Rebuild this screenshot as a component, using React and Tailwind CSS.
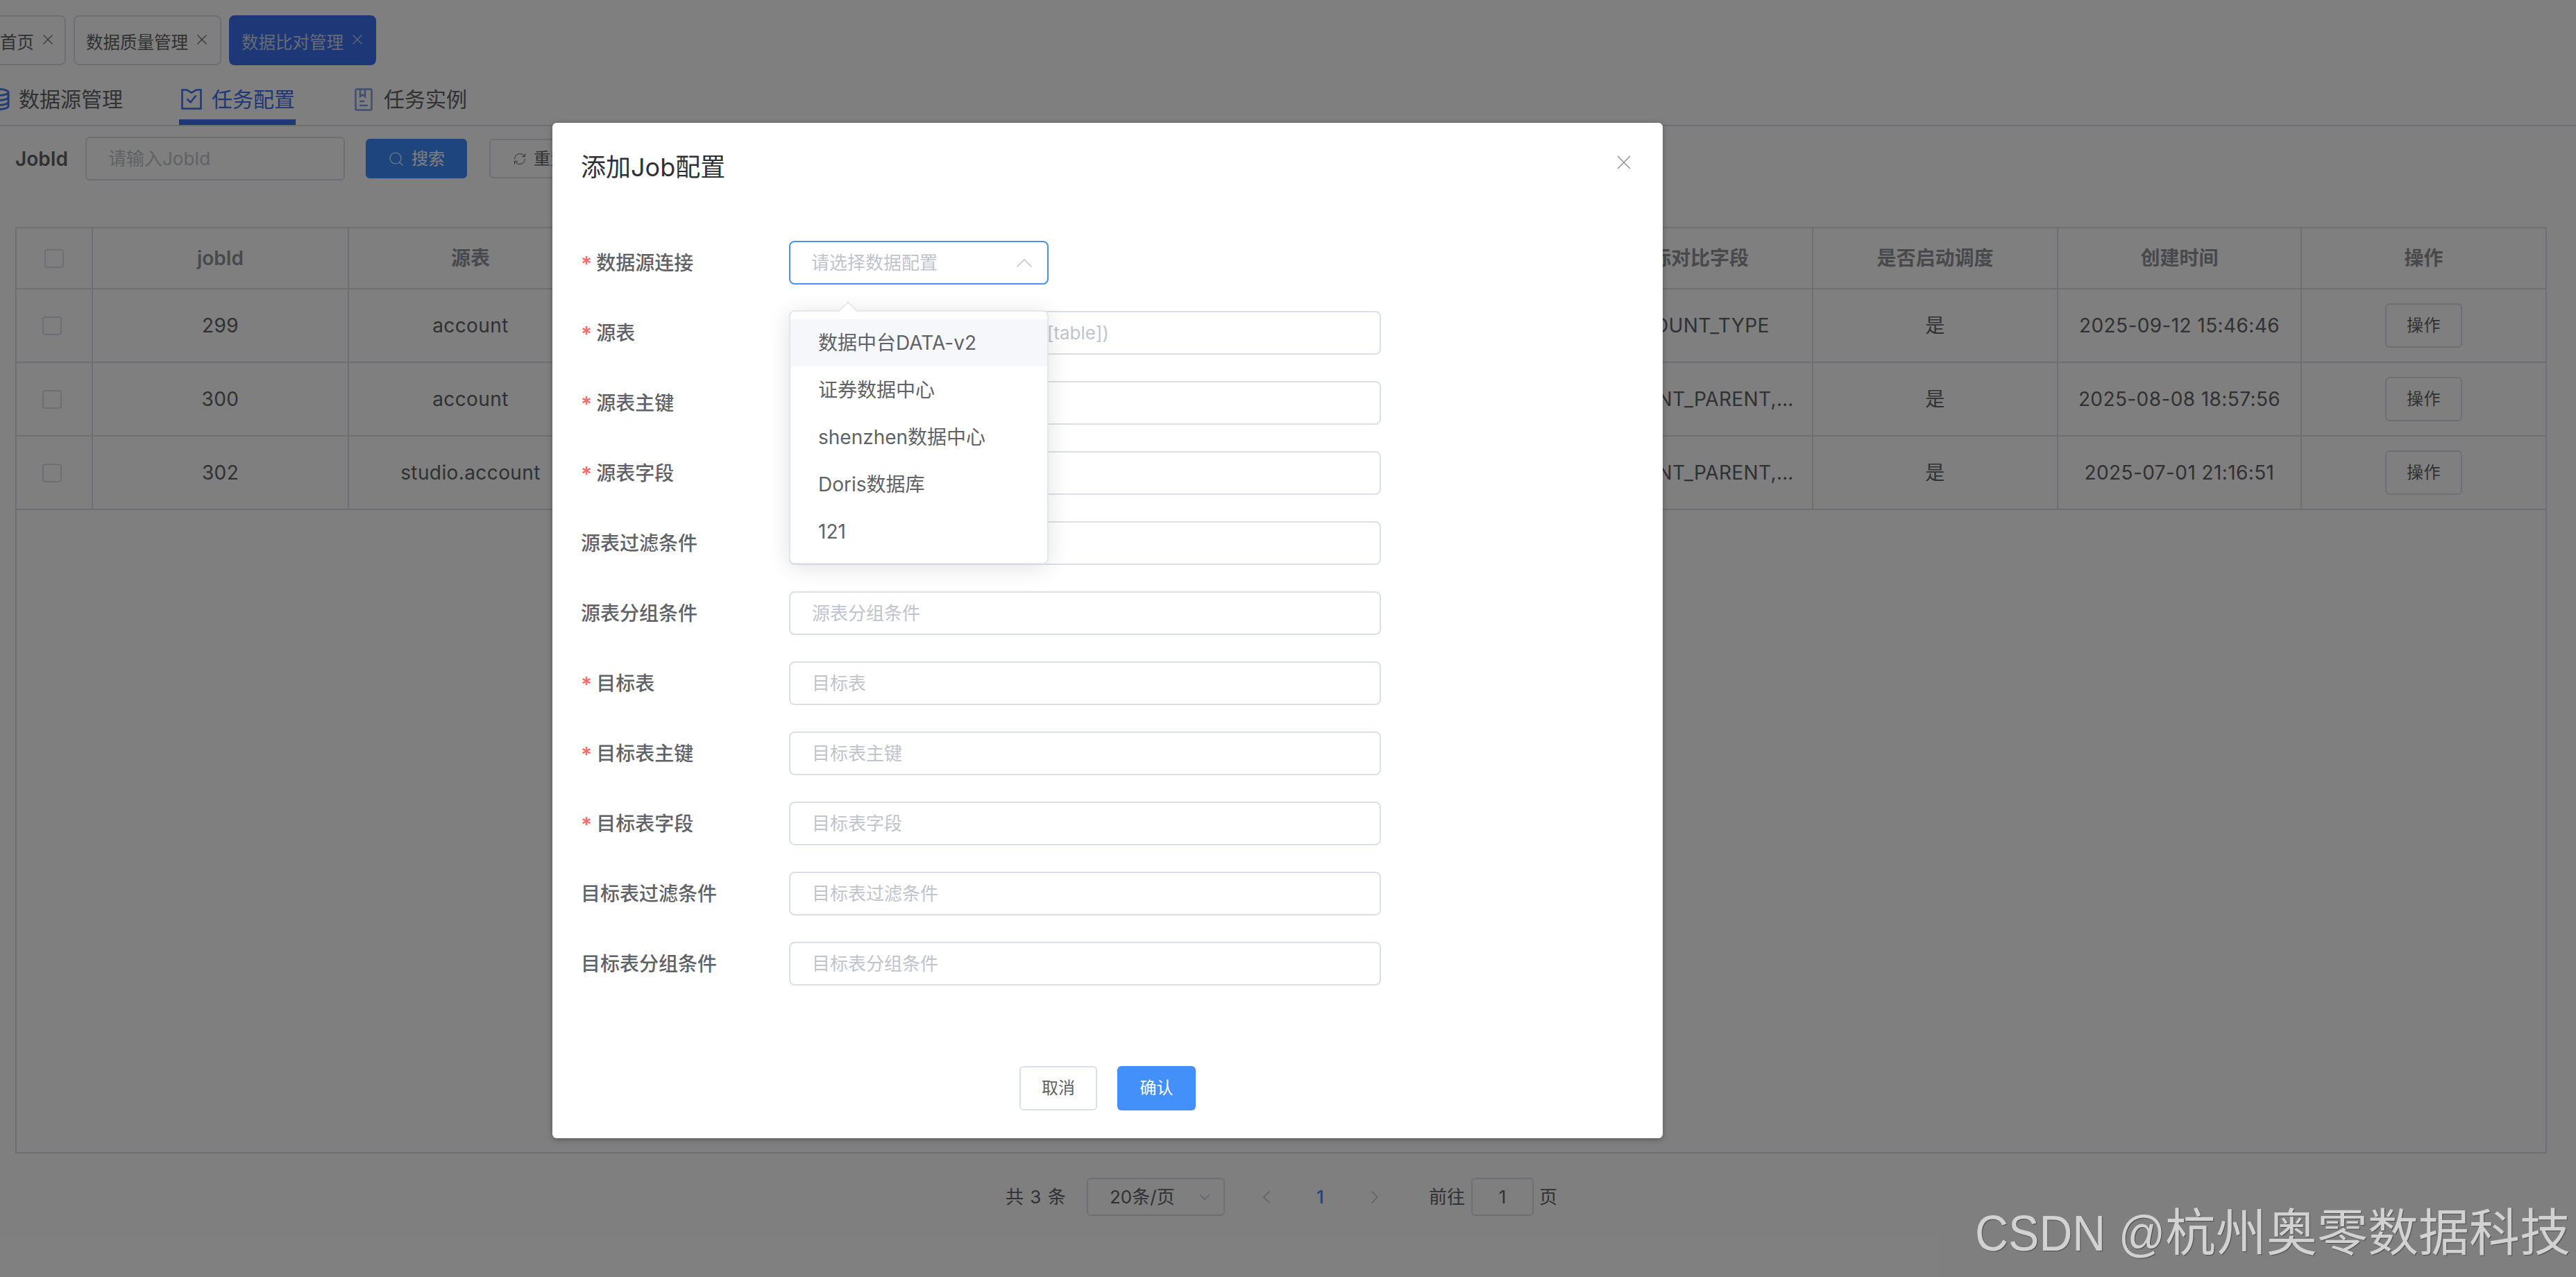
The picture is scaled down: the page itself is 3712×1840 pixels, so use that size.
import { useState } from "react";
import { ChevronDown, ChevronLeft, ChevronRight, ChevronUp, RefreshCw, Search } from "lucide-react";

const font = "font-['Inter','Noto_Sans_CJK_SC',sans-serif]";

const rows = [
  { id: 299, table: "account", field: "ACCOUNT_TYPE", time: "2025-09-12 15:46:46" },
  { id: 300, table: "account", field: "ACCOUNT_PARENT,ACCOUNT_ID,ACCOUNT_TYPE", time: "2025-08-08 18:57:56" },
  { id: 302, table: "studio.account", field: "ACCOUNT_PARENT,ACCOUNT_ID,ACCOUNT_TYPE", time: "2025-07-01 21:16:51" },
];

const fields = [
  { label: "源表", required: true, placeholder: "请输入源表(格式:[database.][table])" },
  { label: "源表主键", required: true, placeholder: "源表主键" },
  { label: "源表字段", required: true, placeholder: "源表字段" },
  { label: "源表过滤条件", placeholder: "源表过滤条件" },
  { label: "源表分组条件", placeholder: "源表分组条件" },
  { label: "目标表", required: true, placeholder: "目标表" },
  { label: "目标表主键", required: true, placeholder: "目标表主键" },
  { label: "目标表字段", required: true, placeholder: "目标表字段" },
  { label: "目标表过滤条件", placeholder: "目标表过滤条件" },
  { label: "目标表分组条件", placeholder: "目标表分组条件" },
];

const options = ["数据中台DATA-v2", "证券数据中心", "shenzhen数据中心", "Doris数据库", "121"];

const gridCols =
  "grid grid-cols-[110px_369px_352px_351px_351px_352px_352px_352px_353px_351px_351px]";

function Cross({ className }) {
  return (
    <svg viewBox="0 0 16 16" className={className} fill="none" stroke="currentColor" strokeWidth="1.1">
      <path d="M1.5 1.5 14.5 14.5M14.5 1.5 1.5 14.5" />
    </svg>
  );
}

function Tab({ children, active, className = "" }) {
  return (
    <div
      className={`flex h-[72px] items-center rounded-[8px] border-2 text-[24.5px] ${
        active ? "border-[#3c6eee] bg-[#3c6eee] text-[#cfd6e8]" : "border-[#dcdfe6] text-[#606266]"
      } ${className}`}
    >
      <span className="pt-[6px]">{children}</span>
      <Cross className="mb-[2px] ml-[12px] h-[16px] w-[16px]" />
    </div>
  );
}

function DbIcon() {
  return (
    <svg viewBox="0 0 30 32" className="h-[32px] w-[30px] text-[#4a78ee]" fill="none" stroke="currentColor" strokeWidth="3">
      <ellipse cx="15" cy="6" rx="13" ry="4.5" />
      <path d="M2 6v20c0 2.5 6 4.5 13 4.5s13-2 13-4.5V6" />
      <path d="M2 13c0 2.5 6 4.5 13 4.5s13-2 13-4.5M2 20c0 2.5 6 4.5 13 4.5s13-2 13-4.5" />
    </svg>
  );
}

function TaskIcon() {
  return (
    <svg viewBox="0 0 30 30" className="h-[30px] w-[30px] text-[#3c6eee]" fill="none" stroke="currentColor" strokeWidth="2.5">
      <path d="M1.5 1.5h6.5l7 4 7-4h6.5v27h-27z" />
      <path d="M8.5 14.5l5 5 8-10" />
    </svg>
  );
}

function DocIcon() {
  return (
    <svg viewBox="0 0 26 33" className="h-[33px] w-[26px] text-[#7f9fe0]" fill="none" stroke="currentColor" strokeWidth="2.5">
      <rect x="1.5" y="1.5" width="23" height="30" rx="1.5" />
      <path d="M8 2v10l3.5-2.5L15 12V2" />
      <path d="M7 19h7M7 25h12" />
    </svg>
  );
}

function HeadCell({ children, last }) {
  return (
    <div className={`flex items-center justify-center text-[28px] font-semibold text-[#909399] ${last ? "" : "border-r-2 border-[#dcdfe6]"}`}>
      {children}
    </div>
  );
}

function Cell({ children, last }) {
  return (
    <div className={`flex items-center justify-center overflow-hidden px-[24px] text-[28px] tracking-[0.4px] text-[#606266] ${last ? "" : "border-r-2 border-[#dcdfe6]"}`}>
      {children}
    </div>
  );
}

function Box({ className = "" }) {
  return <span className={`block h-[27px] w-[28px] rounded-[4px] border-2 border-[#dcdfe6] ${className}`} />;
}

function TaskTable() {
  return (
    <div className="ml-[22px] mt-[67px] h-[1335px] w-[3648px] border-2 border-[#dcdfe6]">
      <div className={`${gridCols} h-[88px] border-b-2 border-[#dcdfe6]`}>
        <HeadCell><Box /></HeadCell>
        <HeadCell>jobId</HeadCell>
        <HeadCell>源表</HeadCell>
        <HeadCell>源表主键</HeadCell>
        <HeadCell>源表字段</HeadCell>
        <HeadCell>目标表</HeadCell>
        <HeadCell>目标表主键</HeadCell>
        <HeadCell>目标对比字段</HeadCell>
        <HeadCell>是否启动调度</HeadCell>
        <HeadCell>创建时间</HeadCell>
        <HeadCell last>操作</HeadCell>
      </div>
      {rows.map((r) => (
        <div key={r.id} className={`${gridCols} h-[106px] border-b-2 border-[#dcdfe6]`}>
          <Cell><Box className="mr-[6px] shrink-0" /></Cell>
          <Cell>{r.id}</Cell>
          <Cell>{r.table}</Cell>
          <Cell>id</Cell>
          <Cell>id</Cell>
          <Cell>{r.table}</Cell>
          <Cell>id</Cell>
          <Cell><span className="truncate">{r.field}</span></Cell>
          <Cell>是</Cell>
          <Cell>{r.time}</Cell>
          <Cell last>
            <button className="h-[64px] w-[111px] shrink-0 rounded-[6px] border-2 border-[#dcdfe6] text-[24px] text-[#606266]">操作</button>
          </Cell>
        </div>
      ))}
    </div>
  );
}

function Pagination() {
  return (
    <div className="mt-[35px] flex h-[55px] items-center text-[26px] text-[#606266]">
      <span className="ml-[1449px] w-[86px] tracking-[1px] whitespace-nowrap">共 3 条</span>
      <div className="ml-[31px] flex h-[55px] w-[199px] items-center justify-between rounded-[6px] border-2 border-[#dcdfe6] pl-[31px] pr-[14px]">
        <span>20条/页</span>
        <ChevronDown className="h-[26px] w-[26px] text-[#c0c4cc]" strokeWidth={1.3} />
      </div>
      <ChevronLeft className="ml-[44px] h-[32px] w-[32px] text-[#c0c4cc]" strokeWidth={1.3} />
      <span className="ml-[56px] w-[20px] font-medium text-[#3f8bfd]">1</span>
      <ChevronRight className="ml-[48px] h-[32px] w-[32px] text-[#c0c4cc]" strokeWidth={1.3} />
      <span className="ml-[62px]">前往</span>
      <div className="ml-[9px] flex h-[55px] w-[90px] items-center justify-center rounded-[6px] border-2 border-[#dcdfe6]">1</div>
      <span className="ml-[8px]">页</span>
    </div>
  );
}

function Background() {
  return (
    <div>
      <div className="-ml-[21px] flex gap-[11px] pt-[22px]">
        <Tab className="w-[116px] pl-[19px]">首页</Tab>
        <Tab className="w-[213px] pl-[16px]">数据质量管理</Tab>
        <Tab active className="w-[212px] pl-[16px]">数据比对管理</Tab>
      </div>

      <div className="flex h-[88px] items-end border-b-2 border-[#dcdfe6] text-[30px] text-[#606266]">
        <div className="-ml-[16px] flex h-[70px] items-center gap-[13px] pb-[4px]">
          <DbIcon />
          <span>数据源管理</span>
        </div>
        <div className="ml-[81px] flex h-[70px] w-[168px] items-center gap-[14px] border-b-[8px] border-[#3c6eee] pl-[3px] pt-[4px] text-[#3c6eee]">
          <TaskIcon />
          <span>任务配置</span>
        </div>
        <div className="ml-[85px] flex h-[70px] items-center gap-[16px] pb-[4px]">
          <DocIcon />
          <span>任务实例</span>
        </div>
      </div>

      <div className="mt-[15px] flex h-[63px] items-center">
        <span className="ml-[22px] w-[101px] text-[28px] font-semibold text-[#606266]">JobId</span>
        <div className="flex h-[63px] w-[374px] items-center rounded-[6px] border-2 border-[#dcdfe6] pl-[31px] text-[26px] text-[#c0c4cc]">请输入JobId</div>
        <button className="ml-[30px] flex h-[57px] w-[146px] items-center justify-center gap-[10px] rounded-[6px] bg-[#3f8bfd] text-[24px] text-white">
          <Search className="h-[24px] w-[24px]" strokeWidth={1.2} />
          搜索
        </button>
        <button className="ml-[32px] flex h-[57px] w-[146px] items-center justify-center gap-[10px] rounded-[6px] border-2 border-[#dcdfe6] text-[24px] text-[#606266]">
          <RefreshCw className="h-[20px] w-[20px]" strokeWidth={1.2} />
          重置
        </button>
      </div>

      <TaskTable />
      <Pagination />
    </div>
  );
}

function Label({ required, children }) {
  return (
    <label className="flex w-[300px] shrink-0 items-center text-[28px] font-medium text-[#606266]">
      {required && <span className="mr-[6px] mt-[3px] text-[30px] font-semibold leading-none text-[#f56c6c]">*</span>}
      {children}
    </label>
  );
}

function DataSourceSelect() {
  return (
    <div className="relative w-[374px]">
      <div className="flex h-[63px] items-center justify-between rounded-[8px] border-2 border-[#4a90f0] pl-[30px] pr-[13px] text-[26px] text-[#c0c4cc]">
        <span>请选择数据配置</span>
        <ChevronUp className="h-[40px] w-[40px]" strokeWidth={0.9} />
      </div>
      <div className="absolute left-0 top-[100px] z-10 h-[366px] w-[374px] rounded-[8px] border-2 border-[#e4e7ed] bg-white py-[11px] shadow-[0_4px_32px_rgba(0,0,0,0.12)]">
        <span className="absolute -top-[11px] left-[73px] h-[20px] w-[20px] rotate-45 border-l-2 border-t-2 border-[#e4e7ed] bg-white" />
        {options.map((o, i) => (
          <div key={o} className={`relative flex h-[68px] items-center pl-[40px] text-[28px] text-[#606266] ${i === 0 ? "bg-[#f5f7fa]" : ""}`}>
            {o}
          </div>
        ))}
      </div>
    </div>
  );
}

function JobDialog() {
  return (
    <div className="absolute left-[796px] top-[177px] z-20 h-[1463px] w-[1600px] rounded-[6px] bg-white pl-[41px] pt-[39px] shadow-[0_2px_8px_rgba(0,0,0,0.3)]">
      <Cross className="absolute right-[45px] top-[46px] h-[22px] w-[22px] text-[#909399]" />
      <h2 className="h-[50px] text-[36px] font-normal leading-[50px] text-[#303133]">添加Job配置</h2>

      <div className="mt-[81px] flex flex-col gap-[38px]">
        <div className="flex h-[63px]">
          <Label required>数据源连接</Label>
          <DataSourceSelect />
        </div>
        {fields.map((f) => (
          <div key={f.label} className="flex h-[63px]">
            <Label required={f.required}>{f.label}</Label>
            <input
              placeholder={f.placeholder}
              className="h-[63px] w-[853px] rounded-[8px] border-2 border-[#dcdfe6] pl-[31px] text-[26px] outline-none placeholder:text-[#c0c4cc]"
            />
          </div>
        ))}
      </div>

      <div className="-ml-[41px] mt-[116px] flex justify-center gap-[29px] text-[24px]">
        <button className="h-[64px] w-[112px] rounded-[6px] border-2 border-[#dcdfe6] text-[#606266]">取消</button>
        <button className="h-[64px] w-[113px] rounded-[6px] bg-[#4490fb] text-white">确认</button>
      </div>
    </div>
  );
}

export default function App() {
  const [open] = useState(true);

  return (
    <div className={`relative h-[1840px] w-[3712px] overflow-hidden bg-white ${font}`}>
      <Background />
      {open && (
        <>
          <div className="absolute inset-0 z-10 bg-black/50" />
          <JobDialog />
        </>
      )}
      <div className="absolute bottom-[23px] right-[8px] z-30 whitespace-nowrap font-['Liberation_Sans','Noto_Sans_CJK_SC',sans-serif] text-[73px] leading-[80px] text-[#d2d2d2] [text-shadow:1px_1px_1px_rgba(0,0,0,0.4)]">
        <span className="inline-block origin-right scale-x-[0.91]">CSDN @</span>
        杭州奥零数据科技
      </div>
    </div>
  );
}
